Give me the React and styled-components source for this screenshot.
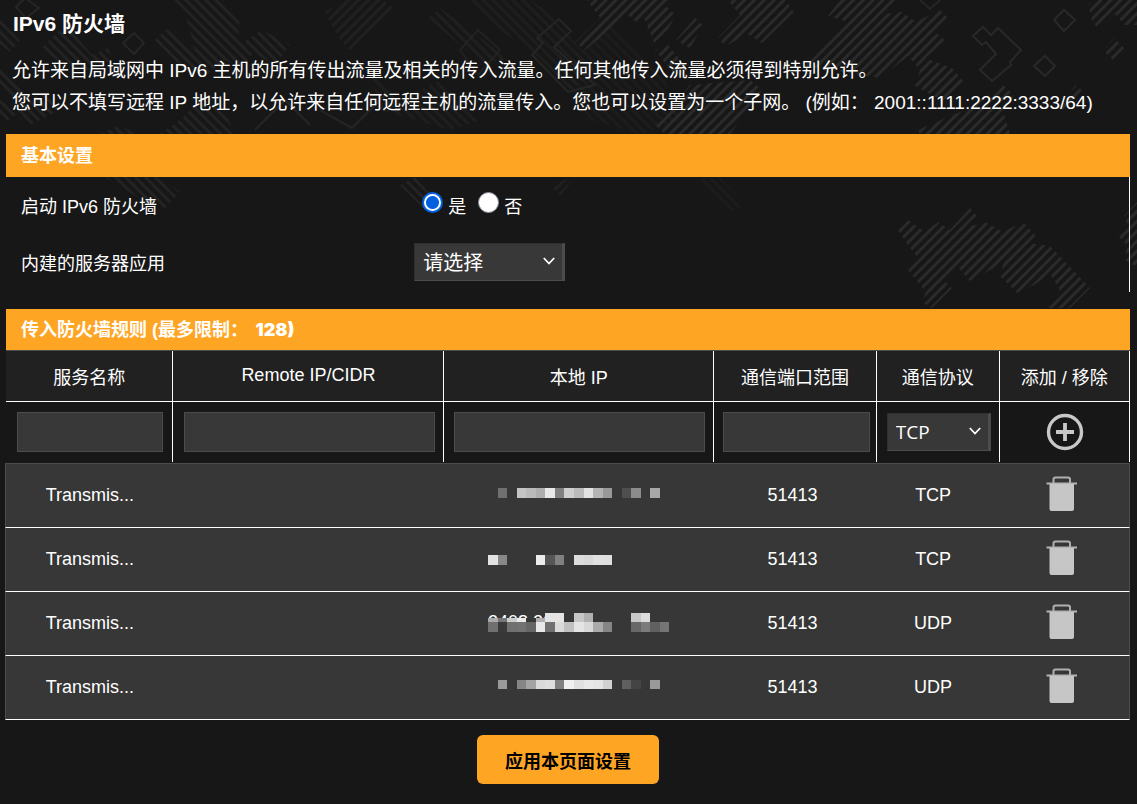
import { useState } from "react";
import styled, { createGlobalStyle } from "styled-components";

const GlobalStyle = createGlobalStyle`
  * {
    box-sizing: border-box;
  }
  body {
    margin: 0;
    background-color: #171717;
    color: #fff;
    font-family: "Liberation Sans", "Noto Sans CJK SC", sans-serif;
    font-size: 18px;
  }
  button, input, select {
    font-family: inherit;
    color: inherit;
  }
`;

const Page = styled.main`
  position: relative;
  overflow: hidden;
  padding: 8px 7px 20px 6px;
`;
const Backdrop = styled.svg`
  position: absolute;
  top: 0;
  left: 0;
  z-index: -1;
`;
const Title = styled.h1`
  margin: 0 0 15px;
  padding-left: 7px;
  font-size: 21px;
  line-height: 32px;
`;
const Description = styled.p`
  margin: 0 0 15px;
  padding-left: 6px;
  font-size: 19px;
  line-height: 32px;
`;
const SectionTitle = styled.h2`
  height: ${({ $height }) => $height}px;
  margin: 0;
  padding: 2px 15px 0;
  background-color: #ffa524;
  font-size: 18px;
  line-height: ${({ $height }) => $height - 2}px;
`;
const Limit = styled.span`
  margin-left: 4px;
  font-family: Inter, "Noto Sans CJK SC", sans-serif;
  font-weight: 900;
  line-height: 1;
`;
const Settings = styled.div`
  margin-bottom: 17px;
  border-right: 1px solid #fff;
`;
const SettingRow = styled.div`
  display: grid;
  grid-template-columns: 35.5% 1fr;
  align-items: center;
  height: ${({ $height }) => $height}px;
  padding-left: 15px;
`;
const RadioGroup = styled.div`
  display: flex;
  gap: 12px;
  padding-left: 8px;
`;
const RadioLabel = styled.label`
  display: flex;
  align-items: center;
  gap: 5px;
`;
const Radio = styled.input`
  appearance: none;
  width: 21px;
  height: 21px;
  margin: 0 0 4px;
  border: 1px solid #8f8f9d;
  border-radius: 50%;
  background-color: #fff;
  &:checked {
    border: 2px solid #0060df;
    background: radial-gradient(circle, #0060df 6px, #fff 7px);
  }
`;
const SelectBox = styled.span`
  position: relative;
  display: inline-block;
  vertical-align: middle;
  width: ${({ $width }) => $width}px;
  svg {
    position: absolute;
    top: 13px;
    right: 10px;
    pointer-events: none;
  }
`;
const Select = styled.select`
  appearance: none;
  display: block;
  width: 100%;
  height: 38px;
  padding: 0 8px;
  border: 1px solid #2f2f2f;
  border-right: 3px solid #4c4c4c;
  border-bottom: 1px solid #4c4c4c;
  border-radius: 0;
  background-color: #383838;
  font-family: "Open Sans", "Noto Sans CJK SC", sans-serif;
  font-size: ${({ $size }) => $size}px;
`;
const RuleTable = styled.table`
  width: 100%;
  table-layout: fixed;
  border-collapse: separate;
  border-spacing: 0;
  border-top: 1px solid #4c4c4c;
  margin-bottom: 1px;
  th,
  td {
    padding: 0;
    border-right: 1px solid #fff;
    text-align: center;
    font-weight: normal;
  }
  th {
    height: 51px;
    padding-bottom: 1px;
    border-bottom: 1px solid #fff;
    background-color: #212121;
  }
  td {
    height: 60px;
    padding-left: 2px;
  }
`;
const TextField = styled.input`
  width: ${({ $width }) => $width}%;
  height: 40px;
  padding: 0 8px;
  border: 1px solid #4c4c4c;
  background-color: #383838;
  font-size: 18px;
  vertical-align: middle;
`;
const ListWrap = styled.div`
  margin-left: -1px;
`;
const ListTable = styled.table`
  width: 100%;
  table-layout: fixed;
  border-collapse: separate;
  border-spacing: 0;
  border-top: 1px solid #4c4c4c;
  background-color: #373737;
  td {
    height: 64px;
    padding: 0;
    border-bottom: 1px solid #fff;
    text-align: center;
  }
  td:first-child {
    border-left: 1px solid #4c4c4c;
  }
  td:last-child {
    border-right: 1px solid #4c4c4c;
  }
`;
const IconButton = styled.button`
  padding: 0;
  border: none;
  background: none;
  vertical-align: middle;
  cursor: pointer;
  svg {
    display: block;
  }
`;
const DeleteButton = styled(IconButton)`
  padding-bottom: 4px;
`;
const MaskSvg = styled.svg`
  display: block;
  margin: 0 auto;
`;
const ApplyButton = styled.button`
  display: block;
  height: 49px;
  margin: 15px auto 0;
  padding: 0 28px;
  border: none;
  border-radius: 6px;
  background-color: #ffa524;
  color: #000;
  font-size: 18px;
  font-weight: bold;
  cursor: pointer;
`;

// each block is [column, y, height, color]
const row = (y, height, cells) =>
  cells.map(([col, color]) => [col, y, height, color]);

const rules = [
  {
    port: "51413",
    protocol: "TCP",
    blocks: row(24, 10, [
      [1, "#707070"], [3, "#c4c4c4"], [4, "#bababa"], [5, "#aeaeae"],
      [6, "#e8e8e8"], [7, "#808080"], [8, "#cecece"], [9, "#bbbbbb"],
      [10, "#e2e2e2"], [11, "#b4b4b4"], [12, "#999999"], [14, "#4e4e4e"],
      [15, "#8c8c8c"], [17, "#a8a8a8"],
    ]),
  },
  {
    port: "51413",
    protocol: "TCP",
    blocks: row(27, 10, [
      [0, "#e2e2e2"], [1, "#888888"], [5, "#ececec"], [6, "#555555"],
      [7, "#808080"], [9, "#dcdcdc"], [10, "#d8d8d8"], [11, "#e0e0e0"],
      [12, "#dedede"],
    ]),
  },
  {
    port: "51413",
    protocol: "UDP",
    prefix: "2408:20",
    blocks: [
      ...row(21, 9, [
        [6, "#e4e4e4"], [7, "#e4e4e4"], [9, "#c6c6c6"], [10, "#b0b0b0"],
        [15, "#c8c8c8"], [16, "#dcdcdc"],
      ]),
      ...row(26, 4, [
        [0, "#aaaaaa"], [1, "#777777"], [2, "#cccccc"], [3, "#eaeaea"],
        [4, "#373737"], [5, "#b0b0b0"],
      ]),
      ...row(30, 10, [
        [0, "#707070"], [1, "#3a3a3a"], [2, "#707070"], [3, "#727272"],
        [4, "#666666"], [5, "#e8e8e8"], [6, "#707070"], [7, "#dadada"],
        [8, "#c0c0c0"], [9, "#e4e4e4"], [10, "#d8d8d8"], [11, "#aaaaaa"],
        [12, "#858585"], [15, "#686868"], [16, "#7c7c7c"], [17, "#606060"],
        [18, "#757575"],
      ]),
    ],
  },
  {
    port: "51413",
    protocol: "UDP",
    blocks: row(24, 9, [
      [1, "#999999"], [3, "#858585"], [4, "#a4a4a4"], [5, "#dadada"],
      [6, "#dedede"], [7, "#808080"], [8, "#f0f0f0"], [9, "#e0e0e0"],
      [10, "#e8e8e8"], [11, "#e4e4e4"], [12, "#d0d0d0"], [14, "#606060"],
      [15, "#444444"], [17, "#999999"],
    ]),
  },
];

function MaskedAddress({ blocks, prefix }) {
  return (
    <MaskSvg width="182" height="63" shapeRendering="crispEdges">
      {prefix && (
        <text x="0" y="36" fontSize="18" fill="#fff">
          {prefix}
        </text>
      )}
      {blocks.map(([col, y, height, color]) => (
        <rect
          key={`${col}-${y}`}
          x={Math.round(col * 9.55)}
          y={y}
          width={Math.round((col + 1) * 9.55) - Math.round(col * 9.55)}
          height={height}
          fill={color}
        />
      ))}
    </MaskSvg>
  );
}

function Chevron() {
  return (
    <svg width="12" height="10" fill="none" stroke="#fff" strokeWidth="1.8">
      <path d="M0.800 2 L6 7.500 L11.200 2" />
    </svg>
  );
}

function PlusIcon() {
  return (
    <svg width="38" height="38" fill="none" stroke="#c8c8c8">
      <circle cx="19" cy="19" r="16.5" strokeWidth="3.4" />
      <path d="M19 10V28M10 19H28" strokeWidth="3.8" />
    </svg>
  );
}

function TrashIcon() {
  return (
    <svg width="32" height="36">
      <path
        d="M7.500 7V3.500Q7.500 1.500 9.500 1.500H22Q24 1.500 24 3.500V7"
        fill="none"
        stroke="#b0b0b0"
        strokeWidth="2"
      />
      <path d="M0.500 6.500H31V8.500H0.500Z" fill="#b5b5b5" />
      <path d="M3.500 8H28V33Q28 35 26 35H5.500Q3.500 35 3.500 33Z" fill="#c6c6c6" />
    </svg>
  );
}

function Pattern() {
  return (
    <Backdrop width="1137" height="310" aria-hidden="true">
      <defs>
        <pattern
          id="rise"
          width="7"
          height="7"
          patternUnits="userSpaceOnUse"
          patternTransform="rotate(-45)"
        >
          <rect width="7" height="3" fill="#2a2a2a" />
        </pattern>
        <pattern
          id="fall"
          width="7"
          height="7"
          patternUnits="userSpaceOnUse"
          patternTransform="rotate(45)"
        >
          <rect width="7" height="3" fill="#232323" />
        </pattern>
      </defs>
      <g fill="url(#fall)">
        <path d="M0 18L20 40L10 52L0 44Z" />
        <path d="M0 68L30 98L45 92L60 110L30 125L0 85Z" />
        <path d="M0 100L20 112L5 122L0 118Z" />
        <path d="M57 32L68 27L92 55L108 48L112 58L100 70L75 70L40 50Z" />
        <path d="M152 42L170 27L195 50L185 12L172 0H222L240 20L238 36L254 52L242 68L225 60L200 80L175 62Z" />
        <path d="M240 45L262 30L290 45L275 65Z" />
        <path d="M180 120L200 100L225 112L235 134H160Z" />
        <path d="M100 134L120 125L135 134Z" />
        <path d="M105 177H160L180 192L165 208L150 205Z" />
        <path d="M400 185L415 177L440 205L425 210Z" />
        <path d="M428 18L440 8L510 60L480 62Z" opacity="0.7" />
        <path d="M465 0H530L545 10L600 70L570 90L530 50L500 30Z" opacity="0.6" />
        <path d="M560 70L610 25L665 80L680 120L640 134L590 120Z" opacity="0.4" />
        <path d="M370 70L400 100L440 80L480 120L450 130L380 110Z" opacity="0.6" />
        <path d="M700 180L720 177L745 205L730 212Z" opacity="0.4" />
      </g>
      <g fill="url(#rise)">
        <path d="M325 12L345 0H382L396 10L365 35L350 50L340 40Z" opacity="0.5" />
        <path d="M587 0H670L650 18L636 22L628 15L585 50L575 42L600 18Z" />
        <path d="M645 20L665 5L676 15L665 35L655 45Z" />
        <path d="M676 40L695 18L703 26L690 48Z" />
        <path d="M655 50L668 45L680 60L690 80L670 70Z" />
        <path d="M728 0H785L794 12L762 43L748 34L725 46L718 38L740 15Z" />
        <path d="M550 185L575 177L560 196Z" opacity="0.5" />
        <path d="M655 125L690 85L750 80L762 90L730 134H665Z" />
        <path d="M840 0H897L885 14L902 12L916 22L940 10L948 18L935 32L947 42L925 58L952 68L964 82L945 102L915 86L920 70L908 56L880 78L800 65L848 22L828 16Z" />
        <path d="M918 130L965 110L1003 85L1014 95L1004 115L1010 134H920Z" />
        <path d="M1088 4L1095 0H1137V25H1125L1115 14L1098 29L1092 20Z" />
        <path d="M1103 50L1114 38L1126 50L1115 62Z" />
        <path d="M1060 105L1076 85L1084 92L1064 113Z" />
        <path d="M898 230L908 220L925 232L938 222L950 230L970 208L977 216L973 226L985 222L1003 232L1023 222L1036 236L1034 244L1050 246L1090 288L1070 308H1047L1060 290L1050 274L1034 285L1017 293L1000 276L1004 262L990 270L970 281L958 267L943 280L952 288L932 308L922 302L926 292L908 270L918 258L908 245Z" />
        <path d="M1137 202L1124 216L1128 226L1116 234L1127 245L1125 260L1137 267Z" />
      </g>
      <g fill="none" stroke="#262626" strokeWidth="2">
        <path d="M16 7L25 -2L39 8L26 18Z" />
        <path d="M123 43L134 33L144 43L134 54Z" />
        <path d="M460 50L478 30L500 50L478 75Z" opacity="0.7" />
        <path d="M532 55L543 43L537 38L559 19L571 31L554 47L595 85L568 92Z" />
        <path d="M255 130L285 100L310 125M320 110L352 128L385 95" />
        <path d="M920 0L930 9L940 0" />
      </g>
      <g fill="none" stroke="#292929" strokeWidth="2">
        <path d="M1054 20L1064 10L1075 20L1064 31Z" />
        <path d="M1034 66L1045 56L1055 66L1045 76Z" />
        <path d="M973 36L983 27L991 35L998 28L1021 50L1010 62L1011 65L992 81L980 70L996 54L986 42L982 45Z" />
      </g>
    </Backdrop>
  );
}

export default function App() {
  const [enabled, setEnabled] = useState("1");

  return (
    <>
      <GlobalStyle />
      <Page>
        <Pattern />
        <Title>IPv6 防火墙</Title>
        <Description>
          允许来自局域网中 IPv6 主机的所有传出流量及相关的传入流量。任何其他传入流量必须得到特别允许。
          <br />
          您可以不填写远程 IP 地址，以允许来自任何远程主机的流量传入。您也可以设置为一个子网。 (例如： 2001::1111:2222:3333/64)
        </Description>

        <SectionTitle $height={43}>基本设置</SectionTitle>
        <Settings>
          <SettingRow $height={55}>
            <span>启动 IPv6 防火墙</span>
            <RadioGroup>
              <RadioLabel>
                <Radio
                  type="radio"
                  name="ipv6_fw_enable"
                  checked={enabled === "1"}
                  onChange={() => setEnabled("1")}
                />
                是
              </RadioLabel>
              <RadioLabel>
                <Radio
                  type="radio"
                  name="ipv6_fw_enable"
                  checked={enabled === "0"}
                  onChange={() => setEnabled("0")}
                />
                否
              </RadioLabel>
            </RadioGroup>
          </SettingRow>
          <SettingRow $height={60}>
            <label htmlFor="known-apps">内建的服务器应用</label>
            <SelectBox $width={151}>
              <Select id="known-apps" $size={20}>
                <option>请选择</option>
              </Select>
              <Chevron />
            </SelectBox>
          </SettingRow>
        </Settings>

        <SectionTitle $height={41}>
          传入防火墙规则 (最多限制：<Limit> 128)</Limit>
        </SectionTitle>
        <RuleTable>
          <colgroup>
            <col width="14.9%" />
            <col width="24.1%" />
            <col width="24%" />
            <col width="14.5%" />
            <col width="10.9%" />
            <col width="11.6%" />
          </colgroup>
          <thead>
            <tr>
              <th>服务名称</th>
              <th>Remote IP/CIDR</th>
              <th>本地 IP</th>
              <th>通信端口范围</th>
              <th>通信协议</th>
              <th>添加 / 移除</th>
            </tr>
          </thead>
          <tbody>
            <tr>
              <td>
                <TextField $width={89} aria-label="服务名称" />
              </td>
              <td>
                <TextField $width={94} aria-label="Remote IP/CIDR" />
              </td>
              <td>
                <TextField $width={94} aria-label="本地 IP" />
              </td>
              <td>
                <TextField $width={92} aria-label="通信端口范围" />
              </td>
              <td>
                <SelectBox $width={104}>
                  <Select $size={19} aria-label="通信协议">
                    <option>TCP</option>
                    <option>UDP</option>
                  </Select>
                  <Chevron />
                </SelectBox>
              </td>
              <td>
                <IconButton type="button" aria-label="添加">
                  <PlusIcon />
                </IconButton>
              </td>
            </tr>
          </tbody>
        </RuleTable>
        <ListWrap>
          <ListTable>
            <colgroup>
              <col width="15%" />
              <col width="24%" />
              <col width="24%" />
              <col width="14%" />
              <col width="11%" />
              <col width="12%" />
            </colgroup>
            <tbody>
              {rules.map((rule, index) => (
                <tr key={index}>
                  <td>Transmis...</td>
                  <td></td>
                  <td>
                    <MaskedAddress blocks={rule.blocks} prefix={rule.prefix} />
                  </td>
                  <td>{rule.port}</td>
                  <td>{rule.protocol}</td>
                  <td>
                    <DeleteButton type="button" aria-label="移除">
                      <TrashIcon />
                    </DeleteButton>
                  </td>
                </tr>
              ))}
            </tbody>
          </ListTable>
        </ListWrap>
        <ApplyButton type="button">应用本页面设置</ApplyButton>
      </Page>
    </>
  );
}
